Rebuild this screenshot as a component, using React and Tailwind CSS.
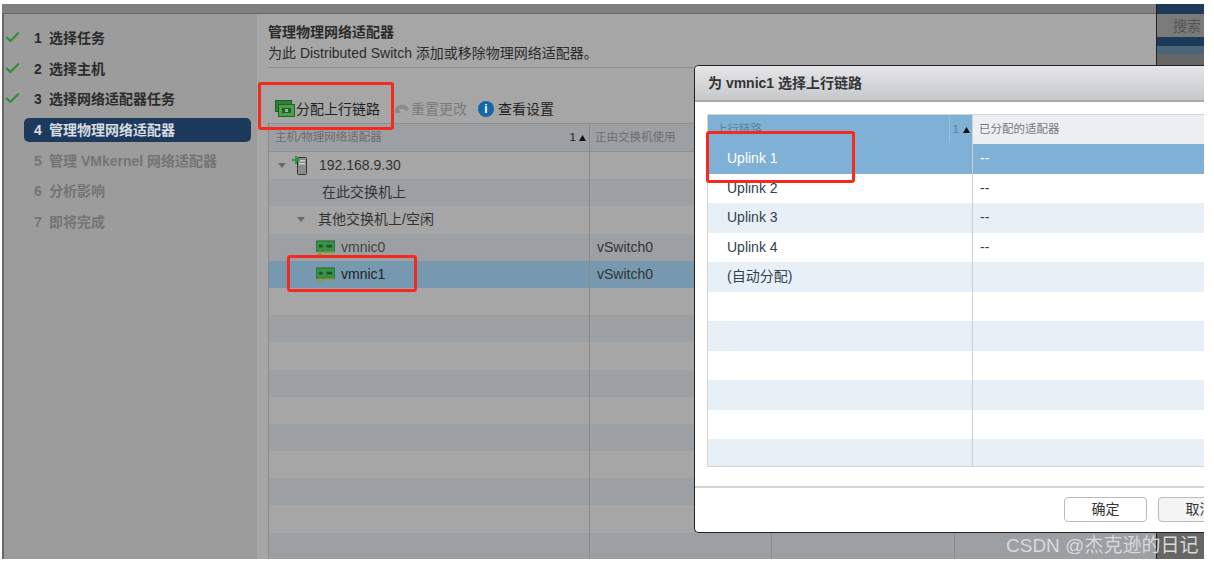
import { Check } from "lucide-react";

const steps = [
	{ n: 1, label: "选择任务", state: "done" },
	{ n: 2, label: "选择主机", state: "done" },
	{ n: 3, label: "选择网络适配器任务", state: "done" },
	{ n: 4, label: "管理物理网络适配器", state: "active" },
	{ n: 5, label: "管理 VMkernel 网络适配器", state: "todo" },
	{ n: 6, label: "分析影响", state: "todo" },
	{ n: 7, label: "即将完成", state: "todo" },
];

const uplinks = ["Uplink 1", "Uplink 2", "Uplink 3", "Uplink 4", "(自动分配)", "", "", "", "", "", ""];

const NicIcon = ({ className = "" }) => (
	<svg viewBox="0 0 20 16" className={className}>
		<rect x="0" y="1" width="20" height="11" fill="#3a9148" stroke="#1f6b2e" />
		<rect x="3" y="5" width="4" height="3" fill="#1d3d2a" opacity="0.75" />
		<rect x="11" y="5" width="6" height="3" fill="#1d3d2a" opacity="0.75" />
		<path d="M2 12h4v4H2zM8 12h11v2H8z" fill="#8a9a3a" />
	</svg>
);

const StackedNicIcon = () => (
	<svg viewBox="0 0 20 18" className="w-[20px] h-[18px] shrink-0">
		<rect x="0.5" y="0.5" width="16" height="11" fill="#2f7f3a" stroke="#1f5f2a" />
		<rect x="3.5" y="4.5" width="16" height="12" fill="#4d9e4a" stroke="#245f2c" />
		<rect x="7" y="8" width="9" height="5" fill="#245f2c" />
		<rect x="10" y="9" width="3" height="3" fill="#8cc07c" />
	</svg>
);

const ServerIcon = () => (
	<svg viewBox="0 0 16 20" className="w-[16px] h-[20px] shrink-0">
		<rect x="5.5" y="1.5" width="9" height="17" rx="1" fill="#8c8c8c" stroke="#333" />
		<rect x="7" y="4" width="6" height="1.5" fill="#d0d0d0" />
		<rect x="7" y="7" width="6" height="1.5" fill="#d0d0d0" />
		<path d="M3 0h2v3h3v2H5v3H3V5H0V3h3z" fill="#2f9a3f" />
	</svg>
);

const Caret = ({ className = "" }) => (
	<svg viewBox="0 0 8 5" className={`w-[8px] h-[5px] shrink-0 ${className}`}>
		<path d="M0 0h8L4 5z" fill="#6a6a6a" />
	</svg>
);

const SortUp = () => (
	<svg viewBox="0 0 7 6" className="w-[7px] h-[6px]">
		<path d="M3.5 0 7 6H0z" fill="#111" />
	</svg>
);

const Row = ({ index, selected, children, second }) => (
	<div
		className={`h-[27.2px] flex shrink-0 ${
			selected ? "bg-[#7799b0]" : index % 2 === 0 ? "bg-[#a6a6a6]" : "bg-[#9ca0a3]"
		}`}>
		<div className="w-[321px] flex items-center border-r border-[#8a8a8a]">{children}</div>
		<div className="w-[182px] flex items-center pl-[7px] border-r border-[#8a8a8a] text-[14px] text-[#333]">
			{second}
		</div>
		<div className="w-[183px] border-r border-[#8a8a8a]"></div>
		<div className="flex-1"></div>
	</div>
);

const Dialog = () => (
	<div className="absolute left-[692px] top-[61px] w-[510px] h-[468px] bg-white border border-[#222] border-r-0 rounded-tl-[5px] rounded-bl-[5px] overflow-hidden flex flex-col">
		<div className="h-[36px] shrink-0 flex items-center pl-[13px] bg-gradient-to-b from-[#e6e6e8] to-[#c6c8ca] border-b-2 border-[#a8a8a8] text-[14px] font-bold text-[#333]">
			为 vmnic1 选择上行链路
		</div>
		<div className="mt-[12px] ml-[12px] border border-[#d4d4d4] border-r-0 flex flex-col h-[353px] overflow-hidden">
			<div className="h-[29px] shrink-0 flex text-[11.5px]">
				<div className="w-[264px] bg-[#7fb0d6] flex items-center justify-between pl-[8px] pr-[2px] text-[#5b7f9c]">
					<span>上行链路</span>
					<span className="flex items-center gap-[4px] border-l border-[#9cc0dc] pl-[3px] h-[25px]">
						<span>1</span>
						<SortUp />
					</span>
				</div>
				<div className="flex-1 bg-[#eceff2] flex items-center pl-[6px] text-[#777] border-l border-[#d4d4d4]">
					已分配的适配器
				</div>
			</div>
			{uplinks.map((name, i) => (
				<div
					key={i}
					className={`h-[29.5px] shrink-0 flex items-center text-[14px] ${
						i === 0
							? "bg-[#7fb0d6] text-white"
							: i % 2 === 0
								? "bg-[#e8f0f7] text-[#33414d]"
								: "bg-white text-[#33414d]"
					}`}>
					<div className="w-[265px] pl-[19px] h-full flex items-center border-r border-[#cfcfcf]">{name}</div>
					<div className="pl-[7px]">{i < 4 ? "--" : ""}</div>
				</div>
			))}
		</div>
		<div className="mt-[19px] border-t-2 border-[#d4d4d4] flex-1 flex items-start pt-[9px] pl-[369px] gap-[11px]">
			<button className="w-[83px] h-[25px] border border-[#bbb] rounded-[4px] bg-white text-[14px] text-[#333] shrink-0">
				确定
			</button>
			<button className="w-[83px] h-[25px] border border-[#bbb] rounded-[4px] bg-[#f4f4f4] text-[14px] text-[#333] shrink-0">
				取消
			</button>
		</div>
	</div>
);

export default function App() {
	return (
		<div
			className="w-[1214px] h-[566px] bg-white overflow-hidden relative pt-[4px] pl-[2px]"
			style={{ fontFamily: '"Liberation Sans", "Noto Sans CJK SC", sans-serif' }}>
			<div className="relative w-[1202px] h-[555px] flex flex-col overflow-hidden">
				{/* top strip */}
				<div className="h-[10px] shrink-0 flex">
					<div className="w-[1154px] bg-[#808080] border-b border-[#666]"></div>
					<div className="flex-1 bg-[#1d3a5c] border-l border-[#222]"></div>
				</div>

				<div className="flex-1 flex min-h-0">
					<div className="w-[2px] bg-[#666]"></div>

					{/* Wizard steps */}
					<div className="w-[253px] shrink-0 bg-[#9c9c9c] pt-[9px]">
						{steps.map((s) => (
							<div key={s.n} className="h-[30.7px] flex items-center relative">
								{s.state === "done" && (
									<Check className="absolute left-[0px] top-[6px] w-[17px] h-[17px] text-[#2f8f35]" strokeWidth={3} />
								)}
								<div
									className={`ml-[20px] w-[227px] h-[24px] rounded-[5px] flex items-center pl-[10px] gap-[8px] text-[14px] font-bold ${
										s.state === "active"
											? "bg-[#1d3a5c] text-[#d8dde2]"
											: s.state === "done"
												? "text-[#2b2b2b]"
												: "text-[#747474]"
									}`}>
									<span className="w-[7px]">{s.n}</span>
									<span>{s.label}</span>
								</div>
							</div>
						))}
					</div>

					{/* Main panel */}
					<div className="w-[899px] shrink-0 bg-[#a6a6a6] flex flex-col pl-[11px]">
						<div className="h-[45px] mt-[9px] border-b border-[#8f8f8f] shrink-0">
							<div className="text-[14px] leading-[18px] font-bold text-[#2b2b2b]">管理物理网络适配器</div>
							<div className="text-[14px] leading-[24px] text-[#2b2b2b]">
								为此 Distributed Switch 添加或移除物理网络适配器。
							</div>
						</div>
						<div className="h-[55px] shrink-0 flex items-end pb-[4px] pl-[7px] text-[14px]">
							<div className="flex items-center h-[20px]">
								<StackedNicIcon />
								<span className="text-[#222] ml-px">分配上行链路</span>
								<svg viewBox="0 0 16 12" className="w-[16px] h-[12px] ml-[14px]">
									<path d="M1 8a7 6 0 0 1 14-1l-3 1a4 3 0 0 0-7-1l2 3H1z" fill="#8b8b8b" />
								</svg>
								<span className="text-[#7b7b7b] ml-px">重置更改</span>
								<span className="w-[16px] h-[16px] ml-[11px] rounded-full bg-[#1666a8] text-white text-[12px] font-bold flex items-center justify-center">
									i
								</span>
								<span className="text-[#222] ml-[4px]">查看设置</span>
							</div>
						</div>

						{/* Grid */}
						<div className="flex-1 min-h-0 flex flex-col border-l border-[#8a8a8a] overflow-hidden">
							<div className="h-[29px] shrink-0 flex bg-[#9ca0a3] border-t border-b border-[#8f8f8f] text-[11.5px] text-[#6c6c6c]">
								<div className="w-[321px] flex items-center justify-between pl-[6px] pr-[3px] border-r border-[#8a8a8a]">
									<span>主机/物理网络适配器</span>
									<span className="flex items-center gap-[3px] text-[#222]">
										1
										<SortUp />
									</span>
								</div>
								<div className="pl-[5px] flex items-center">正由交换机使用</div>
							</div>
							<Row index={0}>
								<Caret className="ml-[9px]" />
								<span className="ml-[6px]">
									<ServerIcon />
								</span>
								<span className="ml-[11px] text-[14px] text-[#333]">192.168.9.30</span>
							</Row>
							<Row index={1}>
								<span className="ml-[53px] text-[14px] text-[#333]">在此交换机上</span>
							</Row>
							<Row index={2}>
								<Caret className="ml-[28px]" />
								<span className="ml-[13px] text-[14px] text-[#333]">其他交换机上/空闲</span>
							</Row>
							<Row index={1} second="vSwitch0">
								<NicIcon className="ml-[47px] w-[19px] h-[15px]" />
								<span className="ml-[6px] text-[14px] text-[#444]">vmnic0</span>
							</Row>
							<Row selected second="vSwitch0">
								<NicIcon className="ml-[47px] w-[19px] h-[15px]" />
								<span className="ml-[6px] text-[14px] text-[#222]">vmnic1</span>
							</Row>
							{[0, 1, 0, 1, 0, 1, 0, 1, 0, 1, 0].map((v, i) => (
								<Row key={i} index={v === 0 ? 2 : 1} />
							))}
						</div>
					</div>

					{/* Search panel behind the dialog */}
					<div className="flex-1 bg-[#666] border-l border-[#222] flex flex-col">
						<div className="h-[23px] shrink-0 bg-[#7a7a7a] flex items-center justify-end pr-[3px] pt-[2px] text-[14px] text-[#555]">
							搜索
						</div>
						<div className="h-[9px] shrink-0 bg-[#1d3a5c]"></div>
						<div className="h-[8px] shrink-0 bg-[#4c6478]"></div>
					</div>
				</div>

				<Dialog />

				{/* Red annotation boxes */}
				<div className="absolute left-[256px] top-[78px] w-[136px] h-[48px] border-[3px] border-[#f52a1f] rounded-[3px]"></div>
				<div className="absolute left-[285px] top-[251px] w-[130px] h-[37px] border-[3px] border-[#f52a1f] rounded-[3px]"></div>
				<div className="absolute left-[704px] top-[127px] w-[149px] h-[52px] border-[3px] border-[#f52a1f] rounded-[3px]"></div>

				{/* Watermark */}
				<div className="absolute left-[1004px] top-[530px] text-[19px] leading-[24px] text-[#d9d9d9] whitespace-nowrap">
					CSDN @杰克逊的日记
				</div>
			</div>
		</div>
	);
}
